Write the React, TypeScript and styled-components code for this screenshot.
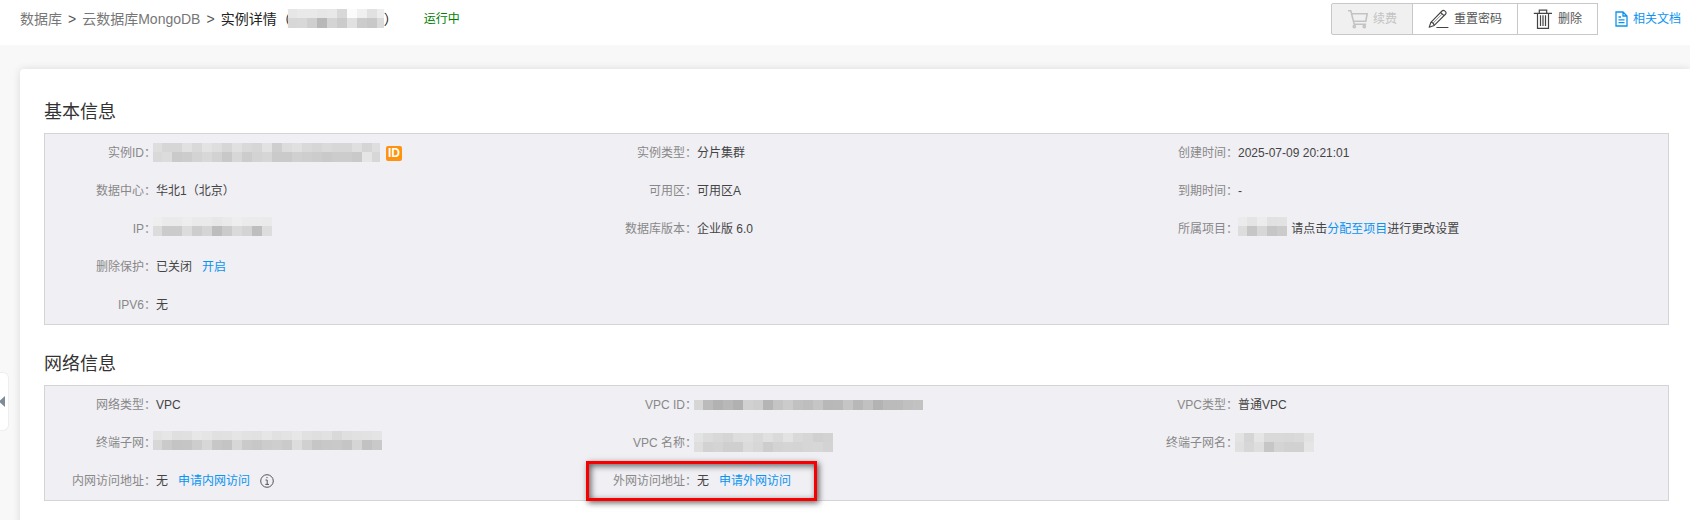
import React from "react";
import styled, { createGlobalStyle } from "styled-components";

const GlobalStyle = createGlobalStyle`
  * { box-sizing: border-box; }
  body {
    margin: 0;
    background: #f8f8f8;
    color: #444;
    font: 12px/18px "Liberation Sans", "Noto Sans CJK SC", sans-serif;
  }
`;

const Page = styled.div`
  min-height: 100vh;
  display: flex;
  flex-direction: column;
  overflow-x: hidden;
`;

const Header = styled.header`
  display: flex;
  align-items: flex-start;
  justify-content: space-between;
  height: 45px;
  padding: 3px 9px 0 20px;
  background: #fff;
`;

const Crumbs = styled.nav`
  display: flex;
  align-items: center;
  gap: 6px;
  height: 32px;
  font-size: 14px;
  color: #555;
`;

const CrumbLink = styled.a`
  color: #777;
  text-decoration: none;
`;

const CrumbCurrent = styled.span`
  display: flex;
  align-items: center;
  color: #222;
`;

const Status = styled.span`
  margin-left: 20px;
  font-size: 12px;
  color: #008000;
`;

const Actions = styled.div`
  display: flex;
  align-items: center;
`;

const ActionButton = styled.button`
  display: flex;
  align-items: center;
  gap: 5px;
  height: 32px;
  margin: 0 0 0 -1px;
  padding: 0 15px;
  border: 1px solid #c8c8c8;
  background: #fff;
  color: #555;
  font: inherit;
  cursor: pointer;
  &:first-child { border-radius: 2px 0 0 2px; }
  &:disabled {
    background: #f0f0f0;
    color: #c3c3c3;
    cursor: default;
  }
`;

const DocLink = styled.a`
  display: flex;
  align-items: center;
  gap: 5px;
  margin-left: 17px;
  color: #0a94f0;
  text-decoration: none;
`;

const Card = styled.main`
  flex: 1;
  margin: 24px 0 0 20px;
  padding: 29px 21px 0 24px;
  background: #fff;
  border-radius: 4px 0 0 0;
  box-shadow: 0 0 8px rgba(0, 0, 0, 0.12);
`;

const Section = styled.section`
  margin-bottom: 25px;
`;

const SectionTitle = styled.h2`
  margin: 0 0 7px;
  font-size: 18px;
  font-weight: 400;
  line-height: 28px;
  color: #333;
`;

const Panel = styled.dl`
  display: grid;
  grid-template-columns: repeat(3, 1fr);
  margin: 0;
  border: 1px solid #d4d4d6;
  background: #f0eff4;
`;

const Cell = styled.div`
  position: relative;
  display: flex;
  align-items: center;
  height: 38px;
  white-space: nowrap;
`;

const Label = styled.dt`
  width: 111px;
  text-align: right;
  color: #888;
`;

const Value = styled.dd`
  display: flex;
  align-items: center;
  margin: 0;
`;

const TextLink = styled.a<{ $gap?: boolean }>`
  margin-left: ${(p) => (p.$gap ? 10 : 0)}px;
  color: #0a94f0;
  text-decoration: none;
`;

const IdBadge = styled.span`
  margin-left: 6px;
  width: 16px;
  height: 15px;
  border-radius: 2px;
  background: #ff9310;
  color: #fff;
  font-size: 12px;
  font-weight: 700;
  line-height: 15px;
  text-align: center;
`;

const Highlight = styled.span`
  position: absolute;
  top: -1px;
  bottom: -1px;
  left: 0;
  width: 231px;
  border: 3px solid #f80000;
  box-shadow: 2px 2px 6px rgba(0, 0, 0, 0.6), inset 2px 2px 6px rgba(0, 0, 0, 0.6);
  pointer-events: none;
`;

const InfoIcon = styled.svg`
  margin-left: 10px;
`;

const SideHandle = styled.button`
  position: absolute;
  top: 372px;
  left: 0;
  display: flex;
  align-items: center;
  width: 9px;
  height: 59px;
  padding: 0;
  border: 1px solid #eee;
  border-left: 0;
  border-radius: 0 6px 6px 0;
  background: #fff;
`;

const MaskSvg = styled.svg<{ $overlap?: boolean; $raised?: boolean }>`
  display: block;
  margin-left: ${(p) => (p.$overlap ? -3 : 0)}px;
  margin-bottom: ${(p) => (p.$raised ? 5 : 1)}px;
`;

type MaskProps = { rows: string[]; overlap?: boolean; raised?: boolean; width?: number };

/* Redacted value: every pair of hex digits is the grey level of one tile. */
function Mask({ rows, overlap, raised, width }: MaskProps) {
  const tiles = rows.map((r) => r.split(" "));
  const height = rows.length * 10 - (rows.length > 1 ? 1 : 0);
  return (
    <MaskSvg
      $overlap={overlap}
      $raised={raised}
      width={width ?? tiles[0].length * 10 - 1}
      height={height}
      shapeRendering="crispEdges"
      aria-hidden="true"
    >
      {tiles.map((row, y) =>
        row.map((v, x) => (
          <rect
            key={`${x}-${y}`}
            x={x ? x * 10 - 1 : 0}
            y={y ? y * 10 - 1 : 0}
            width={x ? 10 : 9}
            height={y || rows.length === 1 ? 10 : 9}
            fill={`#${v}${v}${v}`}
          />
        ))
      )}
    </MaskSvg>
  );
}

const CartIcon = () => (
  <svg width="21" height="20" viewBox="0 0 21 20" fill="none" stroke="#c3c3c3" strokeWidth="1.6">
    <path d="M1 1.7H3.8L7.2 15.2H19.2M4.6 4.7H20.2L18.8 12.2H6.6" />
    <circle cx="7.3" cy="17.6" r="1.1" />
    <circle cx="17.3" cy="17.6" r="1.1" />
  </svg>
);

const PencilIcon = () => (
  <svg width="21" height="20" viewBox="0 0 21 20" fill="none" stroke="#444" strokeWidth="1.1" strokeLinejoin="round">
    <path d="M1.2 18.3L2.9 13.3L14 2Q15.3 .7 17 2.1T17.7 5L6.2 16.4Z" />
    <path d="M2.9 13.3Q5.6 13.6 6.2 16.4M12.6 3.5L16 6.6M8.4 18.5H20.4" />
    <path d="M5 14.2L14.2 5" strokeWidth="0.6" />
  </svg>
);

const TrashIcon = () => (
  <svg width="20" height="20" viewBox="0 0 20 20" fill="none" stroke="#444" strokeWidth="1.2">
    <path d="M.8 4.4H19M6.3 4.4V1.2H13.7V4.4M4.5 4.4V19.3H15.5V4.4M7.5 6.3V17M10 6.3V17M12.5 6.3V17" />
  </svg>
);

const DocIcon = () => (
  <svg width="13" height="16" viewBox="0 0 13 16" fill="none" stroke="#0a94f0" strokeWidth="1.3">
    <path d="M8 1H1V15H12V5ZM8 1V5H12M3.5 6H6M3.5 8.8H9.5M3.5 11.6H9.5" />
  </svg>
);

type Field = { label: string; value: React.ReactNode; marked?: boolean };

const basic: (Field | null)[] = [
  {
    label: "实例ID",
    value: (
      <>
        <Mask
          overlap
          width={227}
          rows={[
            "de d6 d6 e1 d9 e3 de d6 e0 d9 d6 e2 ce dc e0 d9 d6 da d7 d7 df d5 de",
            "d9 dc ca cc d3 d8 d2 c8 d7 cc d3 d6 ca ca d0 ce cc c9 cc cc c9 e5 d7",
          ]}
        />
        <IdBadge>ID</IdBadge>
      </>
    ),
  },
  { label: "实例类型", value: "分片集群" },
  { label: "创建时间", value: "2025-07-09 20:21:01" },
  { label: "数据中心", value: "华北1（北京）" },
  { label: "可用区", value: "可用区A" },
  { label: "到期时间", value: "-" },
  {
    label: "IP",
    value: (
      <Mask
        overlap
        raised
        rows={["ee ea ea ed ea ea e7 ea ee eb eb ea", "dc cb cb dc cd d5 bd cb da d4 be dd"]}
      />
    ),
  },
  { label: "数据库版本", value: "企业版 6.0" },
  {
    label: "所属项目",
    value: (
      <>
        <Mask raised width={50} rows={["eb e4 ec e1 e2", "dd c6 d7 c6 cb"]} />
        &nbsp;请点击<TextLink href="#project">分配至项目</TextLink>进行更改设置
      </>
    ),
  },
  { label: "删除保护", value: <>已关闭<TextLink $gap href="#protect">开启</TextLink></> },
  null,
  null,
  { label: "IPV6", value: "无" },
];

const network: (Field | null)[] = [
  { label: "网络类型", value: "VPC" },
  {
    label: "VPC ID",
    value: (
      <Mask overlap rows={["d6 bb b2 b8 b1 d1 ce b5 c4 cb c1 be c5 b8 b9 c5 b8 c1 b3 bb bb c0 c2"]} />
    ),
  },
  { label: "VPC类型", value: "普通VPC" },
  {
    label: "终端子网",
    value: (
      <Mask
        overlap
        raised
        rows={[
          "e3 e6 df e0 e7 e5 e0 e1 e5 e2 e1 e6 e1 e3 e7 e1 df e1 d9 df e1 e2 e4",
          "d7 ca c4 c5 cd d7 c7 c4 d7 ca c7 cc ce ca dd d0 c6 c8 c9 c5 d5 c2 c9",
        ]}
      />
    ),
  },
  {
    label: "VPC 名称",
    value: (
      <Mask
        overlap
        rows={[
          "e3 dc d8 d5 dd de d9 e0 da e3 d9 d6 d0 d2",
          "de d2 d4 cf cf db d7 cd d3 d5 d4 d6 d7 d3",
        ]}
      />
    ),
  },
  {
    label: "终端子网名",
    value: <Mask overlap rows={["e3 d5 e5 d9 d9 d8 da e2", "e0 d7 de c6 d4 d1 d1 e5"]} />,
  },
  {
    label: "内网访问地址",
    value: (
      <>
        无<TextLink $gap href="#intranet">申请内网访问</TextLink>
        <InfoIcon width="14" height="14" viewBox="0 0 14 14" fill="none" stroke="#555">
          <circle cx="7" cy="7" r="6.3" />
          <path d="M5.5 6H7.2V10.2M5.3 10.4H9M6.4 3.6H7.6" />
        </InfoIcon>
      </>
    ),
  },
  {
    label: "外网访问地址",
    value: <>无<TextLink $gap href="#internet">申请外网访问</TextLink></>,
    marked: true,
  },
];

function InfoSection({ title, fields }: { title: string; fields: (Field | null)[] }) {
  return (
    <Section>
      <SectionTitle>{title}</SectionTitle>
      <Panel>
        {fields.map((f, i) => (
          <Cell key={i}>
            {f && (
              <>
                <Label>{f.label}：</Label>
                <Value>{f.value}</Value>
                {f.marked && <Highlight />}
              </>
            )}
          </Cell>
        ))}
      </Panel>
    </Section>
  );
}

export default function App() {
  return (
    <>
      <GlobalStyle />
      <Page>
        <Header>
          <Crumbs>
            <CrumbLink href="#db">数据库</CrumbLink>
            <span>&gt;</span>
            <CrumbLink href="#mongodb">云数据库MongoDB</CrumbLink>
            <span>&gt;</span>
            <CrumbCurrent>
              实例详情（
              <Mask
                overlap
                width={96}
                rows={["e6 e9 e9 e6 e8 d8 fb f0 e1 ed", "d7 d8 cf b8 d4 cb e1 cc c8 db"]}
              />
              ）
            </CrumbCurrent>
            <Status>运行中</Status>
          </Crumbs>
          <Actions>
            <ActionButton disabled><CartIcon />续费</ActionButton>
            <ActionButton><PencilIcon />重置密码</ActionButton>
            <ActionButton><TrashIcon />删除</ActionButton>
            <DocLink href="#docs"><DocIcon />相关文档</DocLink>
          </Actions>
        </Header>
        <Card>
          <InfoSection title="基本信息" fields={basic} />
          <InfoSection title="网络信息" fields={network} />
        </Card>
      </Page>
      <SideHandle aria-label="收起侧栏">
        <svg width="5" height="11" viewBox="0 0 5 11"><path d="M5 0V11L-1 5.5Z" fill="#7f8b97" /></svg>
      </SideHandle>
    </>
  );
}
